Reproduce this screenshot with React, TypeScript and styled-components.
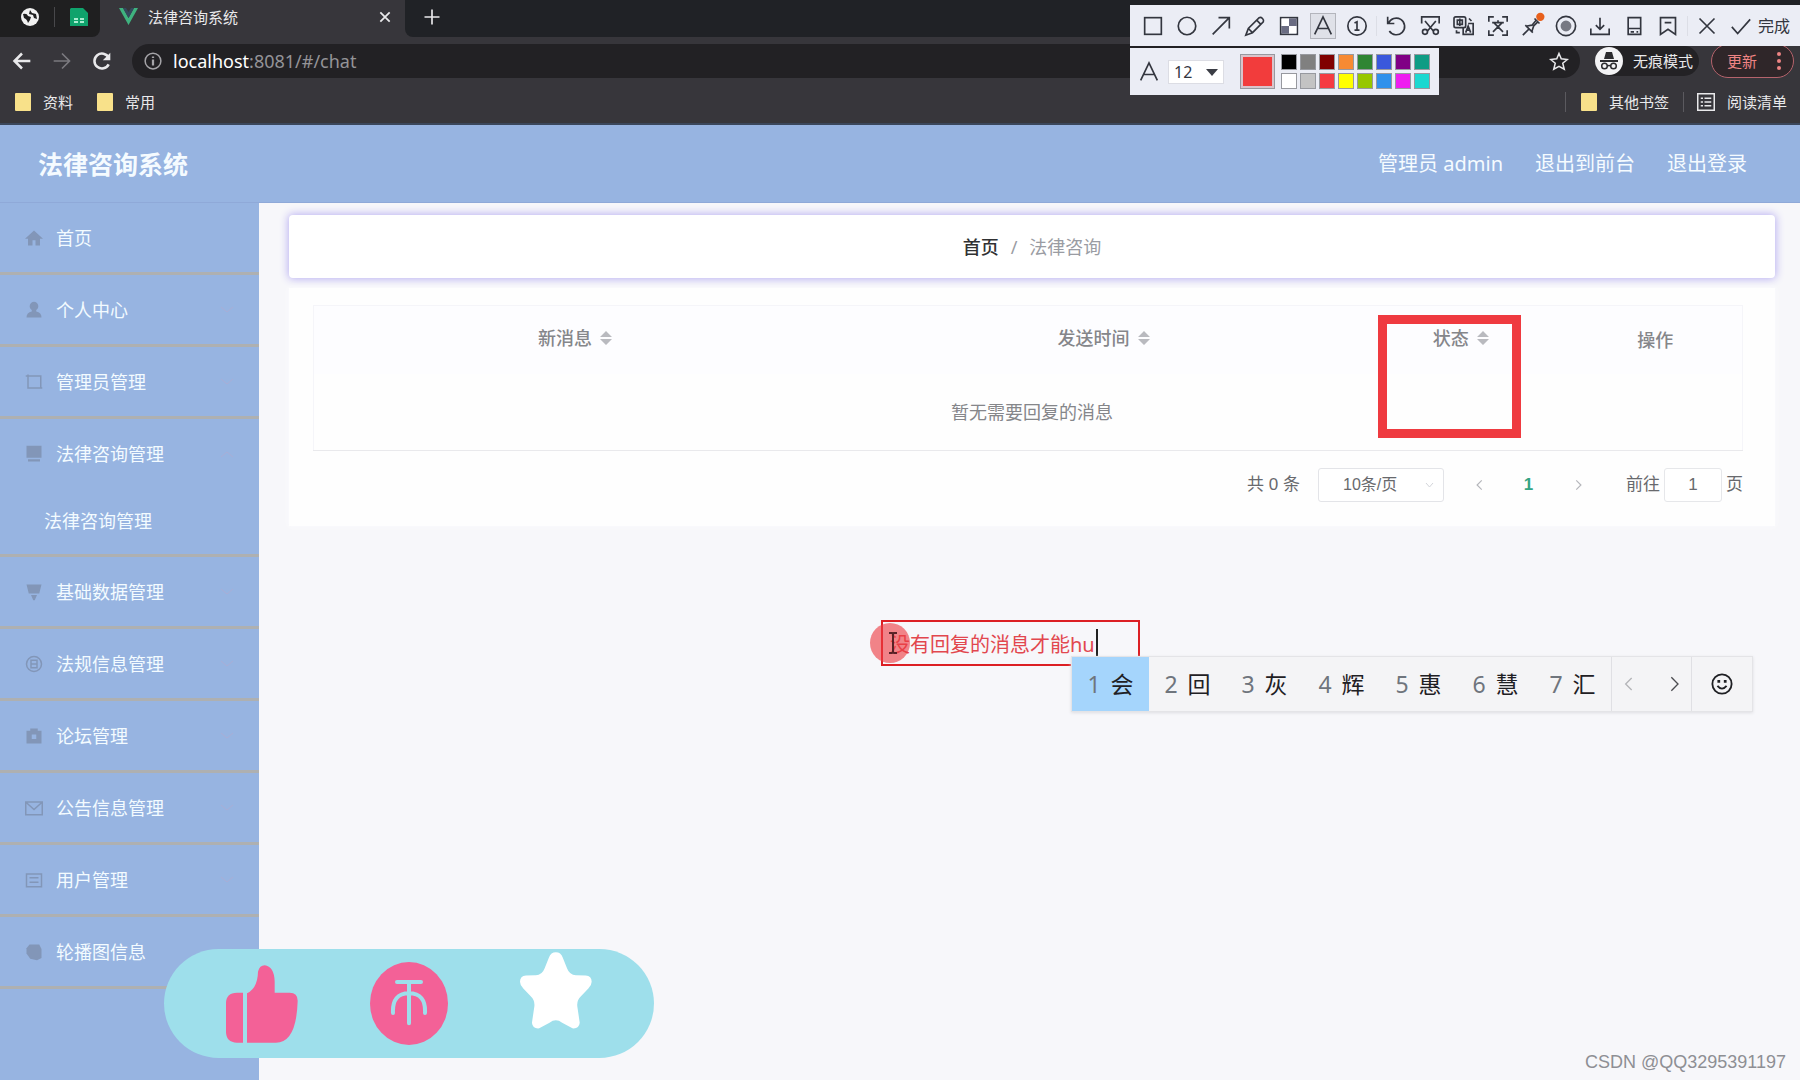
import React from "react";
import styled, { createGlobalStyle } from "styled-components";

const Global = createGlobalStyle`
  * { box-sizing: border-box; }
  body { margin: 0; font-family: "Noto Sans", "Noto Sans CJK SC", sans-serif; background: #f7f7fa; }
  button, input, select { font: inherit; color: inherit; margin: 0; }
  button { background: none; border: 0; padding: 0; cursor: pointer; }
  a { color: inherit; text-decoration: none; }
  ul { list-style: none; margin: 0; padding: 0; }
  svg { display: block; flex: none; }
`;

const Shell = styled.div`
  position: relative;
  display: flex;
  flex-direction: column;
  min-height: 100vh;
  overflow: hidden;
`;

/* ---------- browser frame ---------- */
const Browser = styled.header`
  background: #37363b;
  color: #e9e9eb;
  font-size: 15px;
  line-height: 20px;
  border-bottom: 2px solid #3b475b;
`;
const TabStrip = styled.div`
  display: flex;
  align-items: stretch;
  height: 37px;
  background: #37363b;
`;
const Pinned = styled.div`
  display: flex;
  align-items: center;
  width: 100px;
  padding: 0 12px 4px 21px;
  gap: 15px;
  background: #1f1f20;
  border-bottom-right-radius: 8px;
`;
const PinDivider = styled.span`
  width: 1px;
  height: 20px;
  background: #48484b;
`;
const ActiveTab = styled.div`
  display: flex;
  align-items: center;
  width: 305px;
  padding: 0 13px 4px 19px;
  gap: 10px;
`;
const TabTitle = styled.span`
  flex: 1;
`;
const NewTab = styled.div`
  flex: 1;
  display: flex;
  align-items: center;
  padding: 0 0 4px 17px;
  background: #202226;
  border-bottom-left-radius: 8px;
`;
const NavRow = styled.div`
  display: flex;
  align-items: center;
  height: 48px;
  padding: 0 6px 0 12px;
`;
const NavButtons = styled.div`
  display: flex;
  gap: 20px;
  width: 120px;
`;
const AddressBar = styled.div`
  flex: 1;
  display: flex;
  align-items: center;
  height: 34px;
  padding: 0 12px;
  gap: 11px;
  border-radius: 17px;
  background: #222124;
`;
const Url = styled.span`
  flex: 1;
  font-size: 18px;
  line-height: 24px;
  color: #949397;
  b { font-weight: 400; color: #fff; }
`;
const Incognito = styled.div`
  display: flex;
  align-items: center;
  gap: 10px;
  height: 30px;
  margin: 0 12px 0 15px;
  padding-right: 6px;
  border-radius: 15px;
  background: #232225;
`;
const UpdateButton = styled.button`
  display: flex;
  align-items: center;
  justify-content: space-between;
  width: 83px;
  height: 34px;
  padding: 0 12px 0 15px;
  border: 1px solid #b5636c;
  border-radius: 17px;
  background: #2f2629;
  color: #ee8484;
`;
const Bookmarks = styled.nav`
  display: flex;
  align-items: center;
  height: 38px;
  padding: 0 13px 4px 15px;
`;
const Bookmark = styled.a`
  display: flex;
  align-items: center;
  gap: 12px;
  margin-right: 24px;
  &:last-child { margin-right: 0; }
`;
const Folder = styled.span`
  width: 16px;
  height: 18px;
  border-radius: 1px;
  background: #f8e18a;
`;
const Spacer = styled.span`
  flex: 1;
`;
const BarDivider = styled.span<{ $tight?: boolean }>`
  width: 1px;
  height: 20px;
  margin: ${(p) => (p.$tight ? "0 13px 0 -10px" : "0 15px 0 0")};
  background: #5b5a5f;
`;

/* ---------- application ---------- */
const AppHeader = styled.header`
  display: flex;
  align-items: center;
  justify-content: space-between;
  height: 78px;
  padding: 0 53px 0 38px;
  background: #97b4e1;
  border-bottom: 1px solid #8fa9d8;
  color: #f5fbff;
`;
const Brand = styled.h1`
  margin: 0;
  font-size: 25px;
  line-height: 32px;
  font-weight: 700;
`;
const UserNav = styled.nav`
  display: flex;
  gap: 32px;
  font-size: 20px;
  line-height: 28px;
`;
const Body = styled.div`
  flex: 1;
  display: flex;
`;
const Sidebar = styled.aside`
  width: 259px;
  flex: none;
  background: #97b4e1;
  color: #f3fbff;
  font-size: 18px;
  line-height: 24px;
`;
const MenuItem = styled.li`
  border-bottom: 3px solid #aeb0b1;
`;
const MenuLink = styled.a`
  display: flex;
  align-items: center;
  gap: 13px;
  height: 69px;
  padding: 0 25px;
`;
const MenuIcon = styled.svg`
  color: #8296b8;
`;
const MenuText = styled.span`
  flex: 1;
`;
const SubLink = styled.a`
  display: flex;
  align-items: center;
  height: 66px;
  padding: 0 44px;
`;
const Main = styled.main`
  flex: 1;
  padding: 12px 25px 0 30px;
  background: #f7f7fa;
`;
const Crumbs = styled.nav`
  display: flex;
  align-items: center;
  justify-content: center;
  gap: 12px;
  height: 63px;
  border-radius: 4px;
  background: #fff;
  box-shadow: 0 0 8px 1px #b9b0f2;
  font-size: 18px;
  line-height: 24px;
  color: #9a9ca3;
  a { color: #303133; font-weight: 500; }
`;
const Panel = styled.section`
  margin-top: 10px;
  padding: 17px 32px 24px 24px;
  background: #fefefe;
  box-shadow: 0 0 6px #fcfcfe;
`;
const Table = styled.table`
  width: 100%;
  table-layout: fixed;
  border-collapse: collapse;
  border: 1px solid #f5f5f9;
  border-bottom-color: #e9e9ec;
  font-size: 18px;
  line-height: 24px;
  color: #85868a;
  td { height: 77px; padding: 0 0 0 8px; text-align: center; }
`;
const Th = styled.th<{ $w: string; $plain?: boolean }>`
  width: ${(p) => p.$w};
  height: 68px;
  padding: ${(p) => (p.$plain ? "0 0 0 12px" : "0 0 4px")};
  background: #fdfdff;
  font-weight: 500;
`;
const HeadLabel = styled.span`
  display: inline-flex;
  align-items: center;
  svg { margin: 0 6px 0 8px; }
`;
const Pagination = styled.div`
  display: flex;
  align-items: center;
  justify-content: flex-end;
  height: 34px;
  margin-top: 17px;
  font-family: "Liberation Sans", "Noto Sans CJK SC", sans-serif;
  font-size: 17px;
  line-height: 24px;
  color: #68696d;
`;
const SizeWrap = styled.label`
  position: relative;
  margin: 0 11px 0 18px;
  svg { position: absolute; right: 10px; top: 12px; pointer-events: none; }
`;
const SizeSelect = styled.select`
  appearance: none;
  width: 126px;
  height: 34px;
  padding: 0 20px 0 24px;
  border: 1px solid #e3e4e8;
  border-radius: 3px;
  background: #fff;
  font-size: 16px;
`;
const PageButton = styled.button<{ $current?: boolean }>`
  display: flex;
  align-items: center;
  justify-content: center;
  width: 49px;
  height: 34px;
  font-weight: 700;
  color: ${(p) => (p.$current ? "#35a483" : "#b5b6bb")};
`;
const Jump = styled.label`
  display: flex;
  align-items: center;
  gap: 4px;
  margin-left: 24px;
`;
const JumpInput = styled.input`
  width: 58px;
  height: 34px;
  border: 1px solid #e6e7ea;
  border-radius: 3px;
  background: #fff;
  text-align: center;
`;

/* ---------- screenshot tool overlay ---------- */
const Capture = styled.div`
  position: absolute;
  top: 5px;
  right: 0;
  width: 670px;
  color: #33363f;
`;
const ToolRow = styled.div`
  display: flex;
  align-items: center;
  height: 41px;
  padding-left: 6px;
  background: #ebedf5;
`;
const Tool = styled.button<{ $on?: boolean }>`
  display: flex;
  align-items: center;
  justify-content: center;
  width: 26px;
  height: 26px;
  margin: 0 4px;
  background: ${(p) => (p.$on ? "#dfe1e8" : "none")};
  box-shadow: ${(p) => (p.$on ? "inset 0 0 0 1px #b3b5bc" : "none")};
`;
const ToolGap = styled.span`
  width: 1px;
  height: 20px;
  margin: 0 2px;
  background: #dcdee6;
`;
const Done = styled.button`
  font-size: 16px;
  line-height: 24px;
  white-space: nowrap;
`;
const StyleRow = styled.div`
  display: flex;
  align-items: center;
  width: 309px;
  height: 47px;
  margin-top: 2px;
  padding: 0 9px;
  background: #ebedf5;
`;
const FontSize = styled.label`
  position: relative;
  margin: 0 16px 0 9px;
  svg { position: absolute; right: 6px; top: 9px; pointer-events: none; }
`;
const FontSelect = styled.select`
  appearance: none;
  display: block;
  width: 56px;
  height: 24px;
  padding: 0 5px;
  border: 1px solid #dcdde4;
  background: #fff;
  font-size: 16px;
  line-height: 20px;
`;
const Swatch = styled.button<{ $c: string; $big?: boolean }>`
  width: ${(p) => (p.$big ? 35 : 16)}px;
  height: ${(p) => (p.$big ? 35 : 16)}px;
  border: 1px solid #97999f;
  background: ${(p) => p.$c};
  box-shadow: ${(p) => (p.$big ? "inset 0 0 0 2px #d9c4cb" : "none")};
`;
const Palette = styled.div`
  display: grid;
  grid-template-columns: repeat(8, 16px);
  gap: 3px;
  margin-left: 6px;
`;
const Marker = styled.div`
  position: absolute;
  left: 1378px;
  top: 315px;
  width: 143px;
  height: 123px;
  border: 9px solid #ef3a40;
`;
const Note = styled.div`
  position: absolute;
  left: 881px;
  top: 620px;
  width: 259px;
  height: 46px;
  border: 2px solid #dc1f24;
`;
const NoteInput = styled.input`
  width: 100%;
  height: 100%;
  padding: 0 7px;
  border: 0;
  background: none;
  outline: 0;
  font-size: 20px;
  color: #e2474e;
`;
const Caret = styled.span`
  position: absolute;
  left: 213px;
  top: 7px;
  width: 2px;
  height: 27px;
  background: #222;
`;
const Pointer = styled.div`
  position: absolute;
  left: 870px;
  top: 623px;
  display: flex;
  align-items: center;
  justify-content: center;
  width: 40px;
  height: 40px;
  padding-left: 6px;
  border-radius: 50%;
  background: rgba(238, 60, 66, 0.62);
`;
const Ime = styled.div`
  position: absolute;
  left: 1071px;
  top: 656px;
  display: flex;
  height: 56px;
  border: 1px solid #e4e4e7;
  background: #f4f4f6;
  box-shadow: 0 1px 3px #dedee2;
  font-size: 23px;
  line-height: 32px;
  color: #1f2024;
`;
const Candidate = styled.button<{ $on?: boolean }>`
  display: flex;
  align-items: center;
  justify-content: center;
  gap: 10px;
  width: 77px;
  background: ${(p) => (p.$on ? "#a5d5fc" : "none")};
`;
const Index = styled.span`
  color: #6f757d;
`;
const ImeGroup = styled.div`
  display: flex;
  align-items: center;
  justify-content: center;
  gap: 29px;
  padding: 0 9px;
  border-left: 1px solid #e0e0e4;
`;
const ImeEmoji = styled(ImeGroup)`
  padding: 0 19px;
`;
const Reactions = styled.div`
  position: absolute;
  left: 164px;
  bottom: 22px;
  display: flex;
  align-items: center;
  gap: 72px;
  height: 109px;
  padding: 0 62px;
  border-radius: 55px;
  background: #9edfeb;
`;
const Reaction = styled.button<{ $raised?: boolean }>`
  margin-bottom: ${(p) => (p.$raised ? 26 : 0)}px;
`;
const Watermark = styled.div`
  position: absolute;
  right: 14px;
  bottom: 6px;
  font-family: "Liberation Sans", sans-serif;
  font-size: 18px;
  line-height: 24px;
  color: #8e8f94;
`;

/* Line icon on a 24 unit grid */
function Line({ size = 24, w = 2, children }: { size?: number; w?: number; children: React.ReactNode }) {
  return (
    <svg width={size} height={size} viewBox="0 0 24 24" fill="none" stroke="currentColor" strokeWidth={w} overflow="visible" aria-hidden="true">
      {children}
    </svg>
  );
}

const LetterA = () => <path d="M2 22 12 1l10 21M5 15h14" />;

const tools: { name: string; on?: boolean; art: React.ReactNode }[][] = [
  [
    { name: "矩形", art: <rect x="2" y="2" width="20" height="20" /> },
    { name: "椭圆", art: <circle cx="12" cy="12" r="10.500" /> },
    { name: "箭头", art: <path d="M2 22 22 2M9 2h13v13" /> },
    { name: "画笔", art: <path d="m1 23 3-8L17 2q2-1 4 1 2 2 1 4L9 20zM14 5l5 5M4 15l5 5" /> },
    {
      name: "马赛克",
      art: (
        <>
          <rect x="2" y="2" width="20" height="20" />
          <path fill="#fff" stroke="none" d="M3 3h9v9H3zM12 12h9v9h-9z" />
          <path fill="#6a6c82" stroke="none" d="M12 3h9v9h-9zM3 12h9v9H3z" />
        </>
      ),
    },
    { name: "文字", on: true, art: <LetterA /> },
    { name: "序号", art: <><circle cx="12" cy="12" r="11" /><path d="M9 8.500 12 7v10M9 17h6" /></> },
  ],
  [
    { name: "撤销", art: <path d="M2 1v8h8M3 9a10 10 0 1 1 1 9" /> },
    {
      name: "截取",
      art: <><path d="M2 9V1h21v8M6 6l10 12M19 6 9 18" /><circle cx="6" cy="19" r="3" /><circle cx="19" cy="19" r="3" /></>,
    },
    {
      name: "翻译",
      art: <><rect x="0" y="1" width="14" height="13" rx="2" /><path d="M4 5h6v5H4zM7 3v9M11 14v8h12V9h-6M14 20l3-8 3 8M15 17h4M3 17v3h4M18 3l3 3" /></>,
    },
    { name: "识别", art: <path d="M1 7V1h6M17 1h6v6M23 17v6h-6M7 23H1v-6M5 8h14M12 5v3M7 8l11 11M17 8 6 19" /> },
    {
      name: "钉住",
      art: <><path d="m1 23 8-8M4 11l9 9M6 12l6-1 5-6M12 18l2-6 5-5M15 3l6 6" /><circle cx="22" cy="1" r="5" fill="#e8601c" stroke="none" /></>,
    },
    { name: "录制", art: <><circle cx="12" cy="12" r="11.500" /><circle cx="12" cy="12" r="5.500" fill="#777983" stroke="#777983" /></> },
    { name: "保存", art: <path d="M12 2v14M7 11l5 5 5-5M1 15v7h22v-7" /> },
    { name: "手机", art: <><path d="M5 2h15v20H5zM5 15h15" /><path d="M8 19h4M15 19h2" /></> },
    { name: "收藏", art: <path d="M3 2h18v20l-9-6-9 6zM8 8h8" /> },
  ],
  [
    { name: "关闭", art: <path d="m3 3 18 18M21 3 3 21" /> },
    { name: "确认", art: <path d="m1 13 7 8L23 4" /> },
  ],
];

const colours = [
  "#000000", "#808080", "#800000", "#f78a33", "#2f8533", "#3a58dc", "#800085", "#0f9c84",
  "#ffffff", "#c3c3c3", "#f53b42", "#ffff00", "#97c700", "#2f91ec", "#ee1df0", "#1bd8d0",
];

const menu: { text: string; art: React.ReactNode; sub?: string; leaf?: boolean }[] = [
  { text: "首页", leaf: true, art: <path fill="currentColor" d="M12 2 0 13h4v9h6v-7h4v7h6v-9h4z" /> },
  { text: "个人中心", art: <path fill="currentColor" d="M12 1a6 6 0 0 0-3 11v2q-7 1-7 8h20q0-7-7-8v-2a6 6 0 0 0-3-11z" /> },
  { text: "管理员管理", art: <path fill="none" stroke="currentColor" strokeWidth="2" d="M1 4h20v16M4 2v18h19" /> },
  { text: "法律咨询管理", sub: "法律咨询管理", art: <path fill="currentColor" d="M2 1h20v16H2zM4 19h16v3H4z" /> },
  { text: "基础数据管理", art: <path fill="currentColor" d="M2 2h20l-3 12H5zM8 16h8l-3 7h-2z" /> },
  {
    text: "法规信息管理",
    art: <><circle cx="12" cy="12" r="10" fill="none" stroke="currentColor" strokeWidth="2" /><path fill="none" stroke="currentColor" strokeWidth="2" d="M8 7h8v10H8zM8 12h8" /></>,
  },
  { text: "论坛管理", art: <path fill="currentColor" fillRule="evenodd" d="M2 5h5V2h10v3h5v17H2zM9 10v6h6v-6z" /> },
  { text: "公告信息管理", art: <path fill="none" stroke="currentColor" strokeWidth="2" d="M1 4h22v17H1zM2 5l10 9L22 5" /> },
  { text: "用户管理", art: <path fill="none" stroke="currentColor" strokeWidth="2" d="M2 4h20v17H2zM6 9h12M6 15h12" /> },
  { text: "轮播图信息", art: <path fill="currentColor" d="M6 2h13l3 6v12l-6 3-9-2-5-7V7z" /> },
];

const Sort = () => (
  <svg width="12" height="16" viewBox="0 0 12 16" fill="#b9babf" aria-hidden="true">
    <path d="M6 1l6 6H0zM0 9h12l-6 6z" />
  </svg>
);

function BrowserFrame() {
  return (
    <Browser>
      <TabStrip>
        <Pinned>
          <svg width="18" height="18" viewBox="0 0 18 18" aria-hidden="true">
            <circle cx="9" cy="9" r="9" fill="#f1f1f1" />
            <path d="M2 6q4-1 5 2l3 1-1 3-2 3q-1-4-4-5zM9 2l2 3 4 1 1 5-3-1-1-3-4-1z" fill="#1f1f20" />
          </svg>
          <PinDivider />
          <svg width="18" height="18" viewBox="0 0 18 18" aria-hidden="true">
            <path d="M1 0h12l5 5v13H0V1z" fill="#0fa36c" />
            <path d="M4 10h4v2H4zM10 10h4v2h-4zM4 13h4v2H4zM10 13h4v2h-4z" fill="#a9ecd0" />
          </svg>
        </Pinned>
        <ActiveTab>
          <svg width="19" height="17" viewBox="0 0 19 17" aria-hidden="true">
            <path d="M0 0h4l5.500 10L15 0h4L9.500 17z" fill="#3fb27f" />
            <path d="M4 0h3l2.500 4L12 0h3L9.500 10z" fill="#35495e" />
          </svg>
          <TabTitle>法律咨询系统</TabTitle>
          <button aria-label="关闭标签页"><Line size={14} w={3}><path d="m4 4 16 16M20 4 4 20" /></Line></button>
        </ActiveTab>
        <NewTab>
          <button aria-label="新标签页"><Line size={20} w={2}><path d="M12 3v18M3 12h18" /></Line></button>
        </NewTab>
      </TabStrip>
      <NavRow>
        <NavButtons>
          <button aria-label="后退"><Line size={20} w={3}><path d="M22 12H4M12 3l-9 9 9 9" /></Line></button>
          <button aria-label="前进"><Line size={20} w={2}><path stroke="#7b7a7f" d="M2 12h18M12 3l9 9-9 9" /></Line></button>
          <button aria-label="刷新">
            <Line size={20} w={3}><path d="M20 16a9 9 0 1 1 0-8" /><path d="M22 2v9h-9z" fill="currentColor" stroke="none" /></Line>
          </button>
        </NavButtons>
        <AddressBar>
          <Line size={18} w={2}>
            <g stroke="#a5a4a8"><circle cx="12" cy="12" r="10.500" /><path strokeWidth="3" d="M12 10v8M12 6v2" /></g>
          </Line>
          <Url><b>localhost</b>:8081/#/chat</Url>
          <button aria-label="添加书签">
            <Line size={18} w={2}><path d="m12 2 3 7 8 1-6 5 2 8-7-4-7 4 2-8-6-5 8-1z" /></Line>
          </button>
        </AddressBar>
        <Incognito>
          <svg width="28" height="28" viewBox="0 0 28 28" aria-hidden="true">
            <circle cx="14" cy="14" r="14" fill="#f3f3f5" />
            <path d="m9 12 2-7h6l2 7zM5 13h18v2H5z" fill="#2c2c2f" />
            <g fill="none" stroke="#2c2c2f" strokeWidth="1.500"><circle cx="9.500" cy="19" r="2.800" /><circle cx="18.500" cy="19" r="2.800" /><path d="M12 19q2-1 4 0" /></g>
          </svg>
          无痕模式
        </Incognito>
        <UpdateButton>
          更新
          <svg width="4" height="18" viewBox="0 0 4 18" fill="currentColor" aria-hidden="true">
            <circle cx="2" cy="2" r="2" /><circle cx="2" cy="9" r="2" /><circle cx="2" cy="16" r="2" />
          </svg>
        </UpdateButton>
      </NavRow>
      <Bookmarks>
        <Bookmark href="#"><Folder />资料</Bookmark>
        <Bookmark href="#"><Folder />常用</Bookmark>
        <Spacer />
        <BarDivider />
        <Bookmark href="#"><Folder />其他书签</Bookmark>
        <BarDivider $tight />
        <Bookmark href="#">
          <Line size={18} w={2}><path d="M1 1h22v22H1zM5 7h3M5 12h3M5 17h3M10 7h9M10 12h9M10 17h9" /></Line>
          阅读清单
        </Bookmark>
      </Bookmarks>
    </Browser>
  );
}

function CaptureTools() {
  return (
    <Capture>
      <ToolRow>
        {tools.map((group, i) => (
          <React.Fragment key={i}>
            {i > 0 && <ToolGap />}
            {group.map((t) => (
              <Tool key={t.name} $on={t.on} aria-label={t.name}>
                <Line size={20}>{t.art}</Line>
              </Tool>
            ))}
          </React.Fragment>
        ))}
        <Done>完成</Done>
      </ToolRow>
      <StyleRow>
        <Line size={20} w={2}><LetterA /></Line>
        <FontSize>
          <FontSelect aria-label="字号" defaultValue="12"><option>12</option></FontSelect>
          <svg width="12" height="7" viewBox="0 0 12 7" aria-hidden="true"><path d="M0 0h12L6 7z" fill="#3b3d45" /></svg>
        </FontSize>
        <Swatch $c="#f23c3c" $big aria-label="当前颜色" />
        <Palette>
          {colours.map((c) => <Swatch key={c} $c={c} aria-label={c} />)}
        </Palette>
      </StyleRow>
    </Capture>
  );
}

function MenuList() {
  return (
    <ul>
      {menu.map((m) => (
        <MenuItem key={m.text}>
          <MenuLink href="#">
            <MenuIcon width="18" height="18" viewBox="0 0 24 24" aria-hidden="true">{m.art}</MenuIcon>
            <MenuText>{m.text}</MenuText>
            {!m.leaf && (
              <svg width="14" height="8" viewBox="0 0 14 8" fill="none" stroke="#a9aed6" aria-hidden="true">
                <path d={m.sub ? "M1 7l6-5 6 5" : "M1 1l6 5 6-5"} />
              </svg>
            )}
          </MenuLink>
          {m.sub && <SubLink href="#">{m.sub}</SubLink>}
        </MenuItem>
      ))}
    </ul>
  );
}

export default function App() {
  return (
    <Shell>
      <Global />
      <BrowserFrame />
      <AppHeader>
        <Brand>法律咨询系统</Brand>
        <UserNav>
          <span>管理员 admin</span>
          <a href="#">退出到前台</a>
          <a href="#">退出登录</a>
        </UserNav>
      </AppHeader>
      <Body>
        <Sidebar><MenuList /></Sidebar>
        <Main>
          <Crumbs>
            <a href="#">首页</a><span>/</span><span>法律咨询</span>
          </Crumbs>
          <Panel>
            <Table>
              <thead>
                <tr>
                  <Th $w="37%"><HeadLabel>新消息<Sort /></HeadLabel></Th>
                  <Th $w="37%"><HeadLabel>发送时间<Sort /></HeadLabel></Th>
                  <Th $w="13%"><HeadLabel>状态<Sort /></HeadLabel></Th>
                  <Th $w="13%" $plain>操作</Th>
                </tr>
              </thead>
              <tbody>
                <tr><td colSpan={4}>暂无需要回复的消息</td></tr>
              </tbody>
            </Table>
            <Pagination>
              <span>共 0 条</span>
              <SizeWrap>
                <SizeSelect aria-label="每页条数" defaultValue="10条/页"><option>10条/页</option></SizeSelect>
                <svg width="9" height="9" viewBox="0 0 9 9" fill="none" stroke="#d3d5da" aria-hidden="true"><path d="M1 3l3.500 4L8 3" /></svg>
              </SizeWrap>
              <PageButton aria-label="上一页"><Line size={14}><path d="M15 4 7 12l8 8" /></Line></PageButton>
              <PageButton $current>1</PageButton>
              <PageButton aria-label="下一页"><Line size={14}><path d="m9 4 8 8-8 8" /></Line></PageButton>
              <Jump>前往<JumpInput type="text" defaultValue="1" />页</Jump>
            </Pagination>
          </Panel>
        </Main>
      </Body>

      <CaptureTools />
      <Marker />
      <Note>
        <NoteInput aria-label="标注文字" defaultValue="没有回复的消息才能hu" />
        <Caret />
      </Note>
      <Pointer>
        <svg width="10" height="22" viewBox="0 0 10 22" fill="none" stroke="#5a2226" strokeWidth="2" aria-hidden="true">
          <path d="M1 1h3l1 1 1-1h3M5 2v18M1 21h3l1-1 1 1h3" />
        </svg>
      </Pointer>
      <Ime>
        {["会", "回", "灰", "辉", "惠", "慧", "汇"].map((c, i) => (
          <Candidate key={c} $on={i === 0}><Index>{i + 1}</Index>{c}</Candidate>
        ))}
        <ImeGroup>
          <button aria-label="上一组"><Line size={16}><path stroke="#b3b4b8" d="M16 3 7 12l9 9" /></Line></button>
          <button aria-label="下一组"><Line size={16} w={2}><path stroke="#4b4c50" d="m8 2 10 10L8 22" /></Line></button>
        </ImeGroup>
        <ImeEmoji>
          <button aria-label="表情">
            <Line size={22}><circle cx="12" cy="12" r="10.500" /><path d="M7 14q5 6 10 0" /><path strokeWidth="3" d="M7 9h3M14 9h3" /></Line>
          </button>
        </ImeEmoji>
      </Ime>
      <Reactions>
        <Reaction aria-label="点赞">
          <svg width="72" height="78" viewBox="228 102 216 234" fill="#f36197" aria-hidden="true">
            <path d="M279 185v150h-18q-33-2-33-33v-85q0-32 33-32z" />
            <path d="M291 335V187q32-16 33-65 5-19 20-19 28 3 30 48v34h45q25 0 24 26-4 124-65 124z" />
          </svg>
        </Reaction>
        <Reaction aria-label="投币">
          <svg width="78" height="83" viewBox="660 96 234 249" fill="none" stroke="#9edfeb" strokeWidth="12" strokeLinecap="round" aria-hidden="true">
            <ellipse cx="777" cy="220.500" rx="117" ry="124.500" fill="#f36197" stroke="none" />
            <path d="M741 156h72M777 156v124M729 249q-3-59 48-59t48 59" />
          </svg>
        </Reaction>
        <Reaction $raised aria-label="收藏">
          <svg width="72" height="77" viewBox="1110 65 217 230" fill="#fff" aria-hidden="true">
            <path d="M1218 65q15 0 21 16l13 33q8 21 28 20l28 1q18 1 18 19 0 11-10 20l-23 24q-13 12-10 32l7 47q-2 19-22 17l-31-17q-19-14-38 0l-31 17q-20 2-22-17l7-47q3-20-10-32l-23-24q-10-9-10-20 0-18 18-19l28-1q20 1 28-20l13-33q6-16 21-16z" />
          </svg>
        </Reaction>
      </Reactions>
      <Watermark>CSDN @QQ3295391197</Watermark>
    </Shell>
  );
}
